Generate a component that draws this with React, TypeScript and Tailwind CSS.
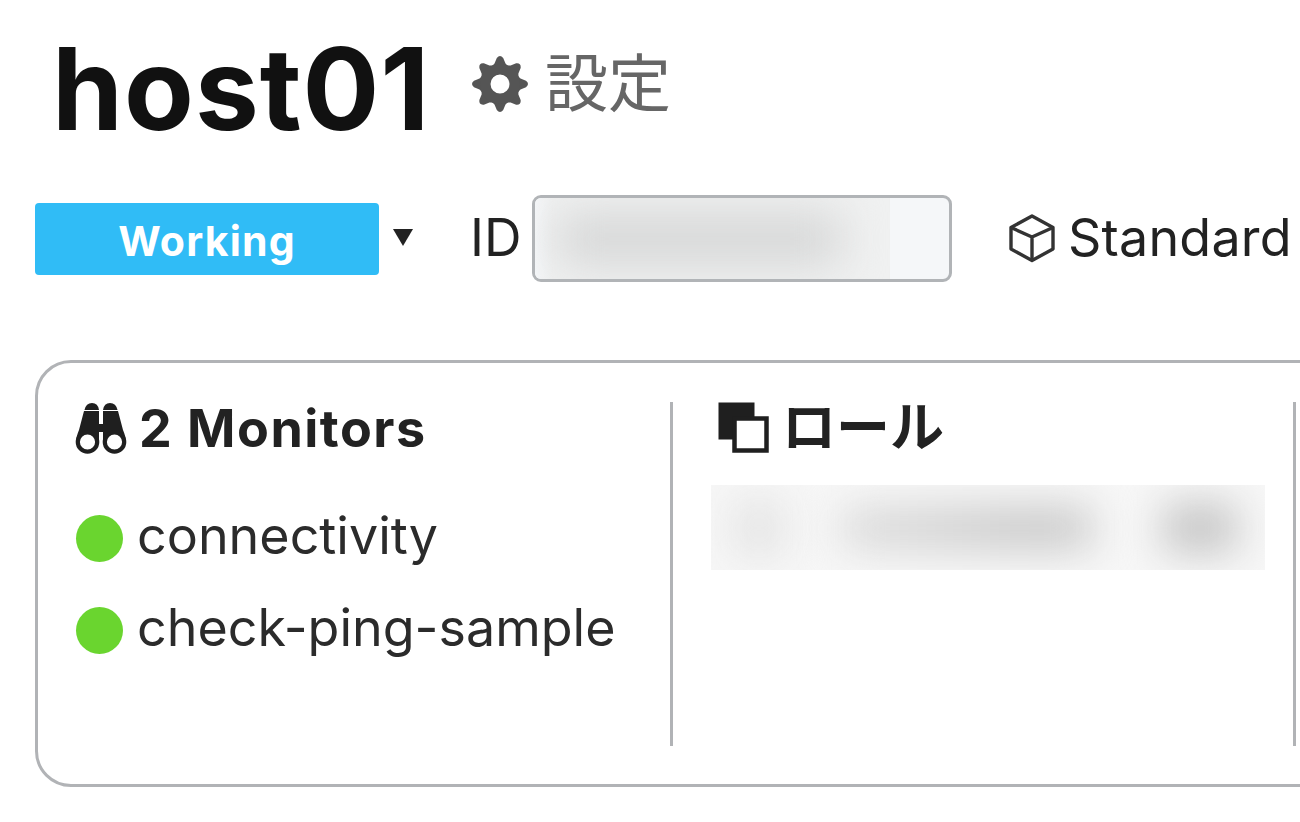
import React from "react";

function GearIcon() {
  const angles = [0, 45, 90, 135, 180, 225, 270, 315];
  return (
    <svg className="mt-[5px] h-14 w-14 shrink-0" viewBox="-28 -28 56 56" aria-hidden="true">
      <g fill="#555555">
        {angles.map((angle) => (
          <path key={angle} d="M-9-17L-5.500-20.500L-3.200-26Q0-30 3.200-26L5.500-20.500L9-17Z" transform={`rotate(${angle})`} />
        ))}
        <path fillRule="evenodd" d="M0-20A20 20 0 1 1 0 20A20 20 0 1 1 0-20ZM0-9.500A9.500 9.500 0 1 0 0 9.500A9.500 9.500 0 1 0 0-9.500Z" />
      </g>
    </svg>
  );
}

function CubeIcon() {
  return (
    <svg className="h-[50px] w-[48px] shrink-0" viewBox="0 0 48 50" fill="none" stroke="#333333" strokeWidth="3.4" strokeLinejoin="round" aria-hidden="true">
      <path d="M24 3L45 14.5V36L24 47.5L3 36V14.5Z" />
      <path d="M3 14.5L24 24L45 14.5M24 24V47.5" />
    </svg>
  );
}

function BinocularsIcon() {
  return (
    <svg className="h-[52px] w-[52px] shrink-0" viewBox="0 0 52 52" aria-hidden="true">
      <g fill="#1f1f1f">
        <path d="M9.500 8Q11 1 17 1Q23 1 24 8Z" />
        <path d="M28 8Q29 1 35 1Q41 1 42.500 8Z" />
        <path d="M9 9H24V40H1Q1 35 4 28Z" />
        <path d="M43 9H28V40H51Q51 35 48 28Z" />
        <rect x="22" y="22" width="8" height="8" />
      </g>
      <circle cx="12.500" cy="40" r="9.700" fill="white" stroke="#1f1f1f" strokeWidth="4.200" />
      <circle cx="39.500" cy="40" r="9.700" fill="white" stroke="#1f1f1f" strokeWidth="4.200" />
    </svg>
  );
}

function RoleIcon() {
  return (
    <svg className="mt-[-2px] h-[51px] w-[51px] shrink-0" viewBox="0 0 51 51" aria-hidden="true">
      <rect x="0.500" y="0.500" width="36" height="37" fill="#1f1f1f" />
      <rect x="16.500" y="16.500" width="32" height="32" fill="white" stroke="#1f1f1f" strokeWidth="4.500" />
    </svg>
  );
}

function Monitor({ name }: { name: string }) {
  return (
    <li className="flex h-[92px] items-center">
      <span className="size-[47px] shrink-0 rounded-full bg-[#6ad52f]" />
      <span className="mb-[4px] ml-[14px] whitespace-nowrap text-[52px] leading-[60px] text-[#2b2b2b]">{name}</span>
    </li>
  );
}

export default function App() {
  return (
    <main className="h-[822px] w-[1300px] overflow-hidden bg-white font-['Inter','Noto_Sans_CJK_JP',sans-serif] text-[#222222]">
      <header className="flex h-[170px] items-start pl-[52px] pt-[18px]">
        <h1 className="w-[420px] whitespace-nowrap text-[114px] font-bold leading-[141px] tracking-[1px] text-[#111111]">host01</h1>
        <a className="flex items-center pt-[26px]">
          <GearIcon />
          <span className="ml-[17px] mt-[-5px] font-['Noto_Sans_CJK_JP',sans-serif] text-[63px] leading-[80px] text-[#666666]">設定</span>
        </a>
      </header>

      <section className="flex h-[136px] items-start pl-[35px] pt-[24px]">
        <button className="mt-[9px] flex h-[72px] w-[344px] shrink-0 items-center justify-center rounded-[4px] bg-[#30bcf6] pt-[4px] text-[41px] font-bold leading-[50px] tracking-[1.2px] text-white">Working</button>
        <svg className="ml-[14px] mt-[35px] h-[18px] w-[20px] shrink-0" viewBox="0 0 20 18" aria-hidden="true">
          <path d="M0 0H20L10 17Z" fill="#222222" />
        </svg>
        <span className="ml-[57px] mt-[14px] w-[62px] shrink-0 whitespace-nowrap text-[52px] leading-[60px]">ID</span>
        <div className="mt-px flex h-[87px] w-[420px] shrink-0 overflow-hidden rounded-[9px] border-[3px] border-[#b1b4b7] bg-[#f5f7f9]">
          <div className="flex h-full w-[355px] items-center overflow-hidden bg-[linear-gradient(90deg,#f5f7f9_0px,#f0f1f1_18px)] pl-[22px]">
            <div className="h-[54px] w-[285px] bg-[#d7d8d8] blur-[22px]" />
          </div>
        </div>
        <div className="ml-[56px] mt-[14px] flex shrink-0 items-center">
          <CubeIcon />
          <span className="ml-[12px] whitespace-nowrap text-[52px] leading-[60px] tracking-[0.2px]">Standard</span>
        </div>
      </section>

      <section className="ml-[35px] mt-[54px] flex h-[427px] w-[1320px] rounded-[36px] border-[3px] border-[#b1b3b6] pt-[39px]">
        <div className="h-[344px] w-[635px] shrink-0 border-r-[3px] border-[#b1b3b6] pl-[37px]">
          <h2 className="flex h-[52px] items-center">
            <BinocularsIcon />
            <span className="ml-[12px] mt-[2px] whitespace-nowrap text-[52px] font-bold leading-[52px] tracking-[1.5px]">2 Monitors</span>
          </h2>
          <ul className="mt-[38px] pl-px">
            <Monitor name="connectivity" />
            <Monitor name="check-ping-sample" />
          </ul>
        </div>
        <div className="h-[344px] w-[623px] shrink-0 border-r-[3px] border-[#b1b3b6] pl-[38px]">
          <h2 className="flex h-[52px] items-center pl-[7px]">
            <RoleIcon />
            <span className="ml-[13px] whitespace-nowrap text-[54px] font-bold leading-[52px]">ロール</span>
          </h2>
          <div className="mt-[31px] flex h-[85px] w-[554px] items-center overflow-hidden bg-[#f7f7f7] pl-[20px]">
            <div className="h-[60px] w-[56px] shrink-0 bg-[#e6e6e6] blur-[20px]" />
            <div className="ml-[54px] h-[44px] w-[252px] shrink-0 bg-[linear-gradient(90deg,#dedede,#c9c9c9_75%,#cecece)] blur-[20px]" />
            <div className="ml-[70px] h-[50px] w-[74px] shrink-0 bg-[#c6c6c6] blur-[20px]" />
          </div>
        </div>
      </section>
    </main>
  );
}
